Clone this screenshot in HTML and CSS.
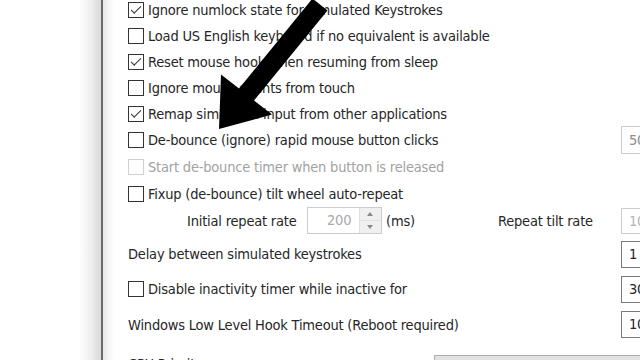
FILE: index.html
```html
<!DOCTYPE html>
<html>
<head>
<meta charset="utf-8">
<link rel="stylesheet" href="styles.css">
</head>
<body>
<div class="screen">
  <div class="backdrop"></div>
  <div class="dialog">
    <div class="row r-first"><span class="box checked"></span><span class="label">Ignore numlock state for simulated Keystrokes</span></div>
    <div class="row"><span class="box"></span><span class="label">Load US English keyboard if no equivalent is available</span></div>
    <div class="row"><span class="box checked"></span><span class="label">Reset mouse hook when resuming from sleep</span></div>
    <div class="row"><span class="box"></span><span class="label">Ignore mouse events from touch</span></div>
    <div class="row"><span class="box checked"></span><span class="label">Remap simulated input from other applications</span></div>
    <div class="row"><span class="box"></span><span class="label">De-bounce (ignore) rapid mouse button clicks</span><span class="field disabled">50</span></div>
    <div class="row r27 off"><span class="box"></span><span class="label">Start de-bounce timer when button is released</span></div>
    <div class="row r27"><span class="box"></span><span class="label">Fixup (de-bounce) tilt wheel auto-repeat</span></div>
    <div class="row r27 indent">
      <span class="lbl-fixed">Initial repeat rate</span>
      <span class="spin"><span class="spin-val">200</span><span class="spin-btns"><span class="up"></span><span class="down"></span></span></span>
      <span class="unit">(ms)</span>
      <span class="label">Repeat tilt rate</span>
      <span class="field disabled f-short">10</span>
    </div>
    <div class="row r40"><span class="label">Delay between simulated keystrokes</span><span class="field">1</span></div>
    <div class="row r30"><span class="box"></span><span class="label">Disable inactivity timer while inactive for</span><span class="field">30</span></div>
    <div class="row r41"><span class="label">Windows Low Level Hook Timeout (Reboot required)</span><span class="field">10</span></div>
    <div class="row r-last"><span class="label">CPU Priority</span><span class="combo"><span class="combo-val">Normal</span></span></div>
  </div>
</div>
<svg class="arrow" width="640" height="360" viewBox="0 0 640 360">
  <polygon points="219,129 221,74.5 239,88.6 312.5,-1.5 327.5,10.5 254,100.4 272,114.5" fill="#000"/>
</svg>
</body>
</html>
```
FILE: styles.css
```css
html, body {
  margin: 0;
  padding: 0;
  background: #fff;
}
body {
  width: 640px;
  height: 360px;
  overflow: hidden;
  position: relative;
  font-family: "DejaVu Sans Condensed", "DejaVu Sans", sans-serif;
  font-size: 14.5px;
  letter-spacing: -0.2px;
  color: #262626;
}
.screen {
  display: flex;
  width: 640px;
  height: 360px;
}
.backdrop {
  flex: none;
  width: 101px;
  height: 360px;
  background: linear-gradient(to right, #fff 0px, #fff 78px, #f1f1f1 90px, #d9d9d9 101px);
}
.dialog {
  flex: none;
  width: 587px;
  height: 400px;
  border-left: 2px solid #6a6a6a;
  box-sizing: border-box;
  padding-left: 25px;
  background: linear-gradient(to right, #e6e6e6 0px, #f6f6f6 6px, #fff 12px);
  display: flex;
  flex-direction: column;
}
.row {
  flex: none;
  height: 26px;
  display: flex;
  align-items: center;
  white-space: nowrap;
}
.r-first { margin-top: -3px; }
.r27 { height: 27px; }
.r30 { height: 30px; }
.r40 { height: 40px; }
.r41 { height: 41px; }
.r-last { height: 38px; }
.box {
  flex: none;
  width: 14px;
  height: 14px;
  border: 1px solid #333;
  background: #fff;
  margin-right: 4px;
  position: relative;
}
.box.checked::after {
  content: "";
  position: absolute;
  left: 2px;
  top: 1px;
  width: 9px;
  height: 4px;
  border-left: 1.6px solid #333;
  border-bottom: 1.6px solid #333;
  transform: translate(0, 2px) rotate(-45deg);
  transform-origin: 50% 50%;
}
.off { color: #a2a2a2; }
.off .box { border-color: #cfcfcf; }
.field {
  margin-left: auto;
  flex: none;
  width: 58px;
  height: 25px;
  border: 1px solid #7a7a7a;
  background: #fff;
  box-sizing: content-box;
  padding-left: 7px;
  line-height: 25px;
}
.field.disabled {
  border-color: #cccccc;
  color: #8c8c8c;
  height: 26px;
  line-height: 26px;
}
.field.f-short {
  height: 24px;
  line-height: 24px;
  color: #b5b5b5;
}
.indent { padding-left: 59px; }
.lbl-fixed {
  flex: none;
  width: 120px;
}
.spin {
  flex: none;
  width: 73px;
  height: 25px;
  border: 1px solid #cdcdcd;
  display: flex;
  background: #fff;
}
.spin-val {
  flex: 1;
  padding-left: 19px;
  line-height: 25px;
  color: #a8a8a8;
}
.spin-btns {
  flex: none;
  width: 21px;
  display: flex;
  flex-direction: column;
  border-left: 1px solid #e0e0e0;
  background: #f0f0f0;
}
.up, .down {
  flex: 1;
  position: relative;
}
.up { border-bottom: 1px solid #e2e2e2; }
.up::after, .down::after {
  content: "";
  position: absolute;
  left: 7px;
  width: 0;
  height: 0;
  border-left: 3.5px solid transparent;
  border-right: 3.5px solid transparent;
}
.up::after { top: 4px; border-bottom: 4px solid #8a8a8a; }
.down::after { top: 4px; border-top: 4px solid #8a8a8a; }
.unit {
  flex: none;
  width: 116px;
  padding-left: 4px;
  box-sizing: border-box;
}
.combo {
  margin-left: auto;
  flex: none;
  width: 252px;
  height: 28px;
  margin-top: 12px;
  border: 1px solid #adadad;
  background: #e1e1e1;
  position: relative;
}
.combo-val {
  position: absolute;
  left: 24px;
  top: 5px;
}
.arrow {
  position: absolute;
  left: 0;
  top: 0;
}
```
